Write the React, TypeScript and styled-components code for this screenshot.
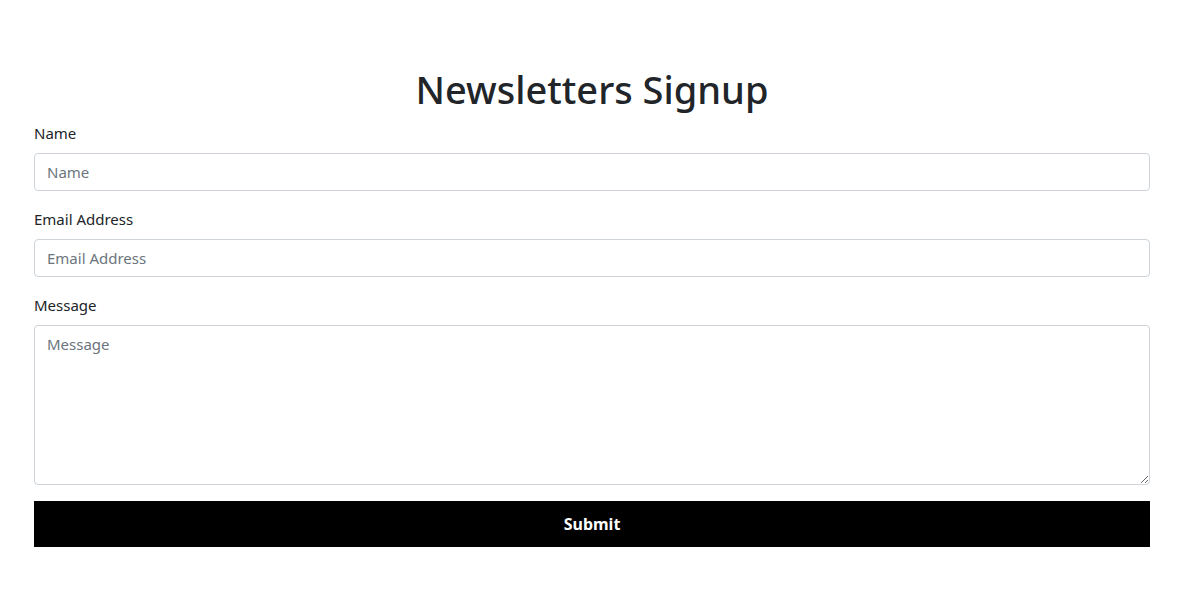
import React from "react";
import styled, { createGlobalStyle } from "styled-components";

const Global = createGlobalStyle`
  * { box-sizing: border-box; }
  body {
    margin: 0;
    background: #fff;
    font-family: "Noto Sans", "Open Sans", sans-serif;
    color: #212529;
  }
`;

const Page = styled.div`
  padding: 65px 32px 0 34px;
`;

const Title = styled.h1`
  margin: 0 0 8px;
  text-align: center;
  font-size: 38px;
  font-weight: 500;
  line-height: 48px;
  color: #212529;
`;

const Form = styled.form`
  display: flex;
  flex-direction: column;
`;

const Field = styled.div`
  display: flex;
  flex-direction: column;
  margin-bottom: 16px;
`;

const Label = styled.label`
  font-size: 15px;
  line-height: 24px;
  margin-bottom: 8px;
  color: #212529;
`;

const Input = styled.input`
  height: 38px;
  padding: 6px 12px;
  font-family: inherit;
  font-size: 15px;
  color: #212529;
  border: 1px solid #ced4da;
  border-radius: 4px;
  outline: none;
  &::placeholder { color: #6c757d; }
`;

const TextArea = styled.textarea`
  height: 160px;
  padding: 6px 12px;
  font-family: inherit;
  font-size: 15px;
  line-height: 24px;
  color: #212529;
  border: 1px solid #ced4da;
  border-radius: 4px;
  outline: none;
  resize: vertical;
  &::placeholder { color: #6c757d; }
`;

const Submit = styled.button`
  height: 46px;
  border: none;
  border-radius: 0;
  background: #000;
  color: #fff;
  font-family: inherit;
  font-size: 16px;
  font-weight: 700;
  cursor: pointer;
`;

export default function App() {
  return (
    <>
      <Global />
      <Page>
        <Title>Newsletters Signup</Title>
        <Form onSubmit={(e) => e.preventDefault()}>
          <Field>
            <Label htmlFor="name">Name</Label>
            <Input id="name" placeholder="Name" />
          </Field>
          <Field>
            <Label htmlFor="email">Email Address</Label>
            <Input id="email" placeholder="Email Address" />
          </Field>
          <Field>
            <Label htmlFor="msg">Message</Label>
            <TextArea id="msg" placeholder="Message" />
          </Field>
          <Submit type="submit">Submit</Submit>
        </Form>
      </Page>
    </>
  );
}
